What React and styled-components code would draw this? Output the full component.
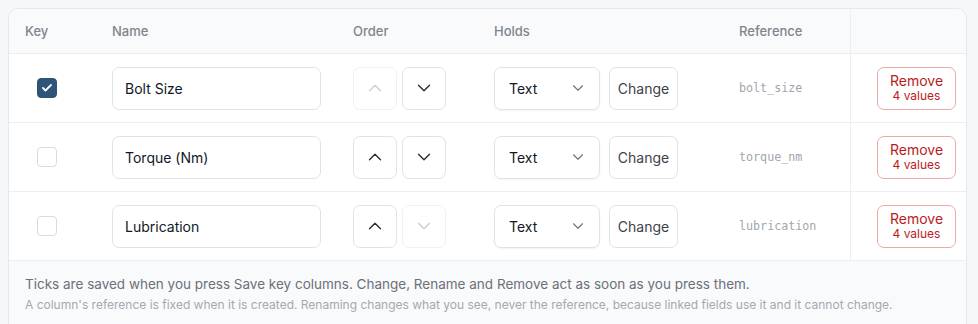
import React from "react";
import styled, { createGlobalStyle } from "styled-components";
import { ChevronUp, ChevronDown, Check } from "lucide-react";

const GlobalStyle = createGlobalStyle`
  body {
    margin: 8px;
    background: #f6f7f9;
    font-family: Inter, "Liberation Sans", sans-serif;
    color: #111827;
  }
`;

const columns = [
  { name: "Bolt Size", ref: "bolt_size", key: true, up: false, down: true },
  { name: "Torque (Nm)", ref: "torque_nm", key: false, up: true, down: true },
  { name: "Lubrication", ref: "lubrication", key: false, up: true, down: false },
];

function App() {
  return (
    <>
      <GlobalStyle />
      <Card>
        <HeadRow>
          <HeadCell>Key</HeadCell>
          <HeadCell>Name</HeadCell>
          <HeadCell>Order</HeadCell>
          <HeadCell>Holds</HeadCell>
          <HeadCell>Reference</HeadCell>
          <ActionCell />
        </HeadRow>
        {columns.map((col) => (
          <Row key={col.ref}>
            <Cell>
              <Tick checked={col.key}>
                {col.key && <Check size={12} strokeWidth={3.6} color="#fff" />}
              </Tick>
            </Cell>
            <Cell>
              <NameInput defaultValue={col.name} />
            </Cell>
            <Cell>
              <Group>
                <IconButton disabled={!col.up}>
                  <ChevronUp size={22} strokeWidth={1.5} />
                </IconButton>
                <IconButton disabled={!col.down}>
                  <ChevronDown size={22} strokeWidth={1.5} />
                </IconButton>
              </Group>
            </Cell>
            <Cell>
              <Group $gap="9px">
                <Select>
                  Text
                  <ChevronDown size={18} strokeWidth={1.5} color="#6b7280" />
                </Select>
                <Button>Change</Button>
              </Group>
            </Cell>
            <Cell>
              <RefText>{col.ref}</RefText>
            </Cell>
            <ActionCell>
              <RemoveButton>
                Remove
                <small>4 values</small>
              </RemoveButton>
            </ActionCell>
          </Row>
        ))}
        <Footer>
          <Note>
            Ticks are saved when you press Save key columns. Change, Rename and
            Remove act as soon as you press them.
          </Note>
          <SubNote>
            A column's reference is fixed when it is created. Renaming changes
            what you see, never the reference, because linked fields use it and
            it cannot change.
          </SubNote>
        </Footer>
      </Card>
    </>
  );
}

export default App;

const Card = styled.div`
  width: 959px;
  box-sizing: border-box;
  background: #fff;
  border: 1px solid #e6e8eb;
  border-radius: 10px;
  overflow: hidden;
`;

const grid = `
  display: grid;
  grid-template-columns: 87px 241px 141px 245px 127px 1fr;
`;

const HeadRow = styled.div`
  ${grid}
  height: 44px;
  background: #f9fafb;
  border-bottom: 1px solid #eceef1;
`;

const HeadCell = styled.div`
  display: flex;
  align-items: center;
  padding-left: 16px;
  font-size: 13px;
  font-weight: 500;
  color: #80858d;
`;

const Row = styled.div`
  ${grid}
  height: 68px;
  border-bottom: 1px solid #eceef1;
`;

const Cell = styled.div`
  display: flex;
  align-items: center;
  padding-left: 16px;
`;

const ActionCell = styled.div`
  display: flex;
  align-items: center;
  padding-left: 26px;
  border-left: 1px solid #eceef1;
`;

const Tick = styled.div`
  width: 20px;
  height: 20px;
  margin-left: 12px;
  box-sizing: border-box;
  border-radius: 4px;
  display: flex;
  align-items: center;
  justify-content: center;
  background: ${(p) => (p.checked ? "#2f5479" : "#fff")};
  border: 1px solid ${(p) => (p.checked ? "#2f5479" : "#d8dbe0")};
`;

const NameInput = styled.input`
  width: 209px;
  height: 43px;
  box-sizing: border-box;
  border: 1px solid #dfe2e6;
  border-radius: 7px;
  padding: 0 12px;
  font-family: inherit;
  font-size: 14px;
  color: #111827;
  outline: none;
`;

const Group = styled.div`
  display: flex;
  gap: ${(p) => p.$gap || "5px"};
`;

const IconButton = styled.button`
  width: 44px;
  height: 43px;
  box-sizing: border-box;
  background: #fff;
  border: 1px solid ${(p) => (p.disabled ? "#f0f1f3" : "#e0e3e7")};
  border-radius: 7px;
  display: flex;
  align-items: center;
  justify-content: center;
  padding: 0;
  color: ${(p) => (p.disabled ? "#cdd0d5" : "#2b2f35")};
`;

const Select = styled.div`
  width: 106px;
  height: 43px;
  box-sizing: border-box;
  border: 1px solid #dfe2e6;
  border-radius: 7px;
  box-shadow: 0 1px 2px rgba(0, 0, 0, 0.05);
  display: flex;
  align-items: center;
  justify-content: space-between;
  padding: 0 12px 0 14px;
  font-size: 14px;
  color: #111827;
`;

const Button = styled.button`
  width: 69px;
  height: 43px;
  box-sizing: border-box;
  background: #fff;
  border: 1px solid #e0e3e7;
  border-radius: 7px;
  font-family: inherit;
  font-size: 14px;
  color: #3d4249;
  padding: 0;
`;

const RefText = styled.span`
  font-family: "DejaVu Sans Mono", "Liberation Mono", monospace;
  font-size: 11.7px;
  color: #a2a6ad;
`;

const RemoveButton = styled.button`
  width: 79px;
  height: 43px;
  box-sizing: border-box;
  background: #fff;
  border: 1px solid #e9aaaa;
  border-radius: 7px;
  display: flex;
  flex-direction: column;
  align-items: center;
  justify-content: center;
  padding: 0;
  font-family: inherit;
  font-size: 14px;
  line-height: 16px;
  color: #b91c1c;
  small {
    font-size: 12px;
    line-height: 14px;
  }
`;

const Footer = styled.div`
  background: #f9fafb;
  padding: 12px 16px 20px;
`;

const Note = styled.div`
  font-size: 13.5px;
  line-height: 22px;
  color: #6b7079;
`;

const SubNote = styled.div`
  font-size: 12px;
  line-height: 20px;
  color: #a4a9b0;
`;
